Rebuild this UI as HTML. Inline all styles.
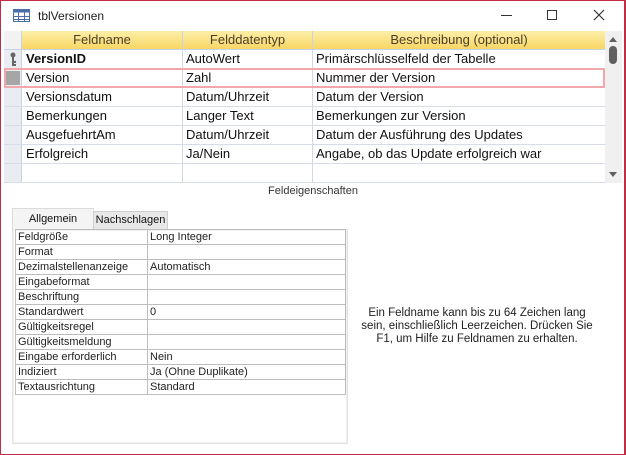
<!DOCTYPE html>
<html><head><meta charset="utf-8"><style>
*{margin:0;padding:0;box-sizing:border-box}
body{width:626px;height:455px;background:#fff;position:relative;overflow:hidden;font-family:"Liberation Sans",sans-serif;color:#111}
.win{position:absolute;left:0;top:0;width:626px;height:455px;border:1px solid #c42b45;border-right-width:2px}
.abs{position:absolute}
.title{left:38px;top:9px;font-size:12px;color:#222}
.grid{left:4px;top:31px;width:602px;height:152px;background:#fff}
.hdr{top:0;height:19px;background:linear-gradient(#fcefa8,#f8d665);border-bottom:1px solid #c9d4e3;font-size:13px;color:#4a3f2a;text-align:center;line-height:18px}
.cell{font-size:13px;line-height:19px;padding-left:4px;white-space:nowrap}
.vl{width:1px;background:#d0d9e6}
.hl{height:1px;background:#d6dde8}
.props{font-size:11px;color:#222}
.pr{position:absolute;left:15px;width:331px;height:15px;border-bottom:1px solid #bdbdbd;line-height:14px}
.pr span{position:absolute;left:3px}
.pr b{font-weight:normal;position:absolute;left:135px}
</style></head><body>
<div class="win"></div>
<svg class="abs" style="left:13px;top:9px" width="17" height="13"><rect x="0.5" y="0.5" width="16" height="12" fill="#fff" stroke="#4a6fa8"/><rect x="0.5" y="0.5" width="16" height="3" fill="#4a6fa8"/><path d="M0 7.5H17M0 10.5H17M5.5 3V13M11.5 3V13" stroke="#4a6fa8"/></svg>
<div class="abs title">tblVersionen</div>
<div class="abs" style="left:501px;top:15px;width:11px;height:1px;background:#333"></div>
<div class="abs" style="left:547px;top:10px;width:10px;height:10px;border:1px solid #333"></div>
<svg class="abs" style="left:593px;top:9px" width="12" height="12"><path d="M1 1L11 11M11 1L1 11" stroke="#333" stroke-width="1.2"/></svg>

<div class="abs grid">
 <div class="abs hdr" style="left:0;width:18px;background:#f2f2f2;border-right:1px solid #c9d4e3"></div>
 <div class="abs hdr" style="left:18px;width:160px">Feldname</div>
 <div class="abs hdr" style="left:178px;width:130px;border-left:1px solid #c9d4e3">Felddatentyp</div>
 <div class="abs hdr" style="left:308px;width:293px;border-left:1px solid #c9d4e3">Beschreibung (optional)</div>
 <div class="abs" style="left:0;top:19px;width:18px;height:133px;background:#e9ecf0;border-right:1px solid #c9d4e3"></div>
 <div class="abs vl" style="left:178px;top:19px;height:133px"></div>
 <div class="abs vl" style="left:308px;top:19px;height:133px"></div>
 <div class="abs hl" style="left:0;top:37px;width:601px"></div>
 <div class="abs hl" style="left:0;top:56px;width:601px"></div>
 <div class="abs hl" style="left:0;top:75px;width:601px"></div>
 <div class="abs hl" style="left:0;top:94px;width:601px"></div>
 <div class="abs hl" style="left:0;top:113px;width:601px"></div>
 <div class="abs hl" style="left:0;top:132px;width:601px"></div>
 <div class="abs hl" style="left:0;top:151px;width:601px"></div>
 <div class="abs" style="left:2px;top:40px;width:14px;height:14px;background:#a6a6a6"></div>
 <div class="abs" style="left:0;top:37px;width:601px;height:20px;border:2px solid #f2a7ab"></div>
 <svg class="abs" style="left:5px;top:21px" width="8" height="15"><circle cx="4" cy="3" r="2.5" fill="#666"/><path d="M4 5V14M4 10H7M4 13H7" stroke="#666" stroke-width="2"/></svg>
 <div class="abs cell" style="left:18px;top:18px;font-weight:bold">VersionID</div>
 <div class="abs cell" style="left:178px;top:18px">AutoWert</div>
 <div class="abs cell" style="left:308px;top:18px">Primärschlüsselfeld der Tabelle</div>
 <div class="abs cell" style="left:18px;top:37px">Version</div>
 <div class="abs cell" style="left:178px;top:37px">Zahl</div>
 <div class="abs cell" style="left:308px;top:37px">Nummer der Version</div>
 <div class="abs cell" style="left:18px;top:56px">Versionsdatum</div>
 <div class="abs cell" style="left:178px;top:56px">Datum/Uhrzeit</div>
 <div class="abs cell" style="left:308px;top:56px">Datum der Version</div>
 <div class="abs cell" style="left:18px;top:75px">Bemerkungen</div>
 <div class="abs cell" style="left:178px;top:75px">Langer Text</div>
 <div class="abs cell" style="left:308px;top:75px">Bemerkungen zur Version</div>
 <div class="abs cell" style="left:18px;top:94px">AusgefuehrtAm</div>
 <div class="abs cell" style="left:178px;top:94px">Datum/Uhrzeit</div>
 <div class="abs cell" style="left:308px;top:94px">Datum der Ausführung des Updates</div>
 <div class="abs cell" style="left:18px;top:113px">Erfolgreich</div>
 <div class="abs cell" style="left:178px;top:113px">Ja/Nein</div>
 <div class="abs cell" style="left:308px;top:113px">Angabe, ob das Update erfolgreich war</div>
</div>
<div class="abs" style="left:605px;top:31px;width:17px;height:152px;background:#f0f0f0"></div>
<svg class="abs" style="left:608px;top:35px" width="10" height="8"><path d="M1 7L5 2L9 7Z" fill="#606060"/></svg>
<div class="abs" style="left:609px;top:46px;width:8px;height:18px;border-radius:4px;background:#606060"></div>
<svg class="abs" style="left:608px;top:171px" width="10" height="8"><path d="M1 1L5 6L9 1Z" fill="#606060"/></svg>
<div class="abs" style="left:0;top:185px;width:626px;text-align:center;font-size:11px;color:#333">Feldeigenschaften</div>

<div class="abs" style="left:12px;top:229px;width:336px;height:215px;background:#f0f0f0;border:1px solid #e2e2e2"></div>
<div class="abs" style="left:14px;top:231px;width:332px;height:211px;background:#fff"></div>
<div class="abs" style="left:12px;top:208px;width:82px;height:22px;background:#f4f4f4;border:1px solid #dcdcdc;border-bottom:none;font-size:11px;text-align:center;line-height:20px">Allgemein</div>
<div class="abs" style="left:93px;top:211px;width:75px;height:18px;background:#e8e8e8;border:1px solid #cfcfcf;border-bottom:none;font-size:11px;text-align:center;line-height:17px">Nachschlagen</div>
<div class="props">
<div class="abs" style="left:15px;top:229px;width:331px;height:1px;background:#bdbdbd"></div>
<div class="abs" style="left:15px;top:229px;width:1px;height:166px;background:#bdbdbd"></div>
<div class="abs" style="left:345px;top:229px;width:1px;height:166px;background:#bdbdbd"></div>
<div class="abs" style="left:147px;top:229px;width:1px;height:166px;background:#bdbdbd"></div>
<div class="pr" style="top:230px"><span>Feldgröße</span><b>Long Integer</b></div>
<div class="pr" style="top:245px"><span>Format</span></div>
<div class="pr" style="top:260px"><span>Dezimalstellenanzeige</span><b>Automatisch</b></div>
<div class="pr" style="top:275px"><span>Eingabeformat</span></div>
<div class="pr" style="top:290px"><span>Beschriftung</span></div>
<div class="pr" style="top:305px"><span>Standardwert</span><b>0</b></div>
<div class="pr" style="top:320px"><span>Gültigkeitsregel</span></div>
<div class="pr" style="top:335px"><span>Gültigkeitsmeldung</span></div>
<div class="pr" style="top:350px"><span>Eingabe erforderlich</span><b>Nein</b></div>
<div class="pr" style="top:365px"><span>Indiziert</span><b>Ja (Ohne Duplikate)</b></div>
<div class="pr" style="top:380px"><span>Textausrichtung</span><b>Standard</b></div>
</div>
<div class="abs" style="left:357px;top:307px;width:240px;text-align:center;font-size:11.5px;line-height:13px;color:#222">Ein Feldname kann bis zu 64 Zeichen lang sein, einschließlich Leerzeichen. Drücken Sie F1, um Hilfe zu Feldnamen zu erhalten.</div>
</body></html>
